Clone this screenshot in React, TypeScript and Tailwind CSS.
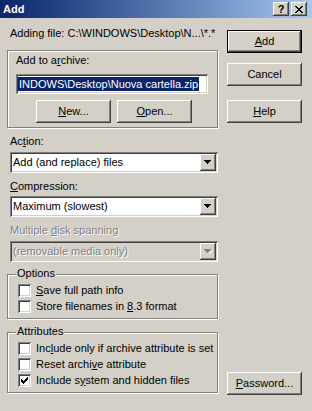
import React from "react";

const raised =
  "shadow-[inset_-1px_-1px_0_#404040,inset_1px_1px_0_#fff,inset_-2px_-2px_0_#808080,inset_2px_2px_0_#d4d0c8]";
const sunken =
  "shadow-[inset_1px_1px_0_#808080,inset_-1px_-1px_0_#fff,inset_2px_2px_0_#404040,inset_-2px_-2px_0_#d4d0c8]";
const etched =
  "border border-[#808080] shadow-[inset_1px_1px_0_#fff,1px_1px_0_#fff]";

function Btn({
  children,
  def,
  className = "",
}: {
  children: React.ReactNode;
  def?: boolean;
  className?: string;
}) {
  return (
    <div
      className={`flex h-[23px] w-[75px] items-center justify-center bg-[#d4d0c8] text-[11px] leading-[13px] text-black ${
        def ? "border border-black" : ""
      } ${raised} ${className}`}
    >
      <span>{children}</span>
    </div>
  );
}

function Arrow({ disabled }: { disabled?: boolean }) {
  return (
    <svg width="8" height="5" viewBox="0 0 8 5" shapeRendering="crispEdges">
      {disabled && <path d="M2 1h7v1H8v1H7v1H6v1H5V4h1V3h1V2h1V1z" fill="#fff" />}
      <path
        d="M0 0h7v1H6v1H5v1H4v1H3V3H2V2H1V1H0z"
        fill={disabled ? "#808080" : "#000"}
      />
    </svg>
  );
}

function Combo({
  text,
  disabled,
  className = "",
}: {
  text: string;
  disabled?: boolean;
  className?: string;
}) {
  return (
    <div
      className={`ml-[3px] flex h-[21px] w-[208px] items-center ${
        disabled ? "bg-[#d4d0c8]" : "bg-white"
      } ${sunken} ${className}`}
    >
      <div
        className={`flex-1 pl-[3px] text-[11px] leading-[13px] ${
          disabled
            ? "text-[#808080] [text-shadow:1px_1px_0_#fff]"
            : "text-black"
        }`}
      >
        {text}
      </div>
      <div
        className={`mr-[2px] flex h-[17px] w-[16px] items-center justify-center bg-[#d4d0c8] ${raised}`}
      >
        <Arrow disabled={disabled} />
      </div>
    </div>
  );
}

function Check({ checked }: { checked?: boolean }) {
  return (
    <div
      className={`flex h-[13px] w-[13px] shrink-0 items-center justify-center bg-white ${sunken}`}
    >
      {checked && (
        <svg width="7" height="7" viewBox="0 0 7 7" shapeRendering="crispEdges">
          <path
            d="M6 0h1v3H6v1H5v1H4v1H3v1H2V6H1V5H0V2h1v1h1v1h1V3h1V2h1V1h1z"
            fill="#000"
          />
        </svg>
      )}
    </div>
  );
}

function CheckRow({
  children,
  checked,
}: {
  children: React.ReactNode;
  checked?: boolean;
}) {
  return (
    <div className="flex h-[16px] items-start gap-[5px]">
      <Check checked={checked} />
      <span className="text-[11px] leading-[13px] text-black">{children}</span>
    </div>
  );
}

function Group({
  label,
  className = "",
  children,
}: {
  label: string;
  className?: string;
  children: React.ReactNode;
}) {
  return (
    <div className={`relative w-[211px] pl-[10px] pt-[9px] ${etched} ${className}`}>
      <span className="absolute left-[8px] top-[-8px] bg-[#d4d0c8] px-[1px] text-[11px] leading-[13px] text-black">
        {label}
      </span>
      {children}
    </div>
  );
}

export default function App() {
  return (
    <div className="h-[411px] w-[312px] overflow-hidden bg-[#d4d0c8] font-['Liberation_Sans',Arial,sans-serif] text-black">
      {/* Title bar */}
      <div className="flex h-[18px] items-center bg-gradient-to-r from-[#0a246a] to-[#a6caf0] pl-[3px] pr-[5px]">
        <span className="flex-1 text-[11px] font-bold leading-[13px] text-white">
          Add
        </span>
        <div
          className={`flex h-[14px] w-[16px] items-center justify-center bg-[#d4d0c8] ${raised}`}
        >
          <span className="text-[11px] font-bold leading-[11px] text-black">?</span>
        </div>
        <div
          className={`ml-[2px] flex h-[14px] w-[16px] items-center justify-center bg-[#d4d0c8] ${raised}`}
        >
          <svg width="8" height="7" viewBox="0 0 8 7" shapeRendering="crispEdges">
            <path
              d="M0 0h2v1h1v1h2V1h1V0h2v1H7v1H6v1H5v1h1v1h1v1h1v1H6V6H5V5H3v1H2v1H0V6h1V5h1V4h1V3H2V2H1V1H0z"
              fill="#000"
            />
          </svg>
        </div>
      </div>

      {/* Body */}
      <div className="flex pl-[7px]">
        {/* Left column */}
        <div className="flex w-[211px] flex-col">
          <div className="ml-[3px] mt-[9px] whitespace-nowrap text-[11px] leading-[13px]">
            Adding file: C:\WINDOWS\Desktop\N...\*.*
          </div>

          <div className={`mt-[10px] h-[78px] w-[211px] pl-[8px] pt-[3px] ${etched}`}>
            <div className="text-[11px] leading-[13px]">
              Add to a<u>r</u>chive:
            </div>
            <div
              className={`mt-[7px] flex h-[20px] w-[192px] items-center overflow-hidden bg-white pl-[2px] ${sunken}`}
            >
              <span className="whitespace-nowrap bg-[#0a246a] pl-[1px] pr-[1px] text-[11px] leading-[14px] text-white">
                INDOWS\Desktop\Nuova cartella.zip
              </span>
            </div>
            <div className="ml-[20px] mt-[6px] flex gap-[6px]">
              <Btn>
                <u>N</u>ew...
              </Btn>
              <Btn>
                <u>O</u>pen...
              </Btn>
            </div>
          </div>

          <div className="ml-[3px] mt-[7px] text-[11px] leading-[13px]">
            Ac<u>t</u>ion:
          </div>
          <Combo text="Add (and replace) files" className="mt-[4px]" />

          <div className="ml-[3px] mt-[7px] text-[11px] leading-[13px]">
            <u>C</u>ompression:
          </div>
          <Combo text="Maximum (slowest)" className="mt-[3px]" />

          <div className="ml-[3px] mt-[7px] text-[11px] leading-[13px] text-[#808080] [text-shadow:1px_1px_0_#fff]">
            Multiple <u>d</u>isk spanning
          </div>
          <Combo text="(removable media only)" disabled className="mt-[4px]" />

          <Group label="Options" className="mt-[12px] h-[45px]">
            <CheckRow>
              <u>S</u>ave full path info
            </CheckRow>
            <CheckRow>
              Store filenames in <u>8</u>.3 format
            </CheckRow>
          </Group>

          <Group label="Attributes" className="mt-[13px] h-[61px]">
            <CheckRow>
              Inc<u>l</u>ude only if archive attribute is set
            </CheckRow>
            <CheckRow>
              Reset archi<u>v</u>e attribute
            </CheckRow>
            <CheckRow checked>
              Include s<u>y</u>stem and hidden files
            </CheckRow>
          </Group>
        </div>

        {/* Right column */}
        <div className="ml-[9px] flex w-[75px] flex-col">
          <Btn def className="mt-[12px]">
            <u>A</u>dd
          </Btn>
          <Btn className="mt-[10px]">Cancel</Btn>
          <Btn className="mt-[14px]">
            <u>H</u>elp
          </Btn>
          <Btn className="mt-[249px]">
            <u>P</u>assword...
          </Btn>
        </div>
      </div>
    </div>
  );
}
